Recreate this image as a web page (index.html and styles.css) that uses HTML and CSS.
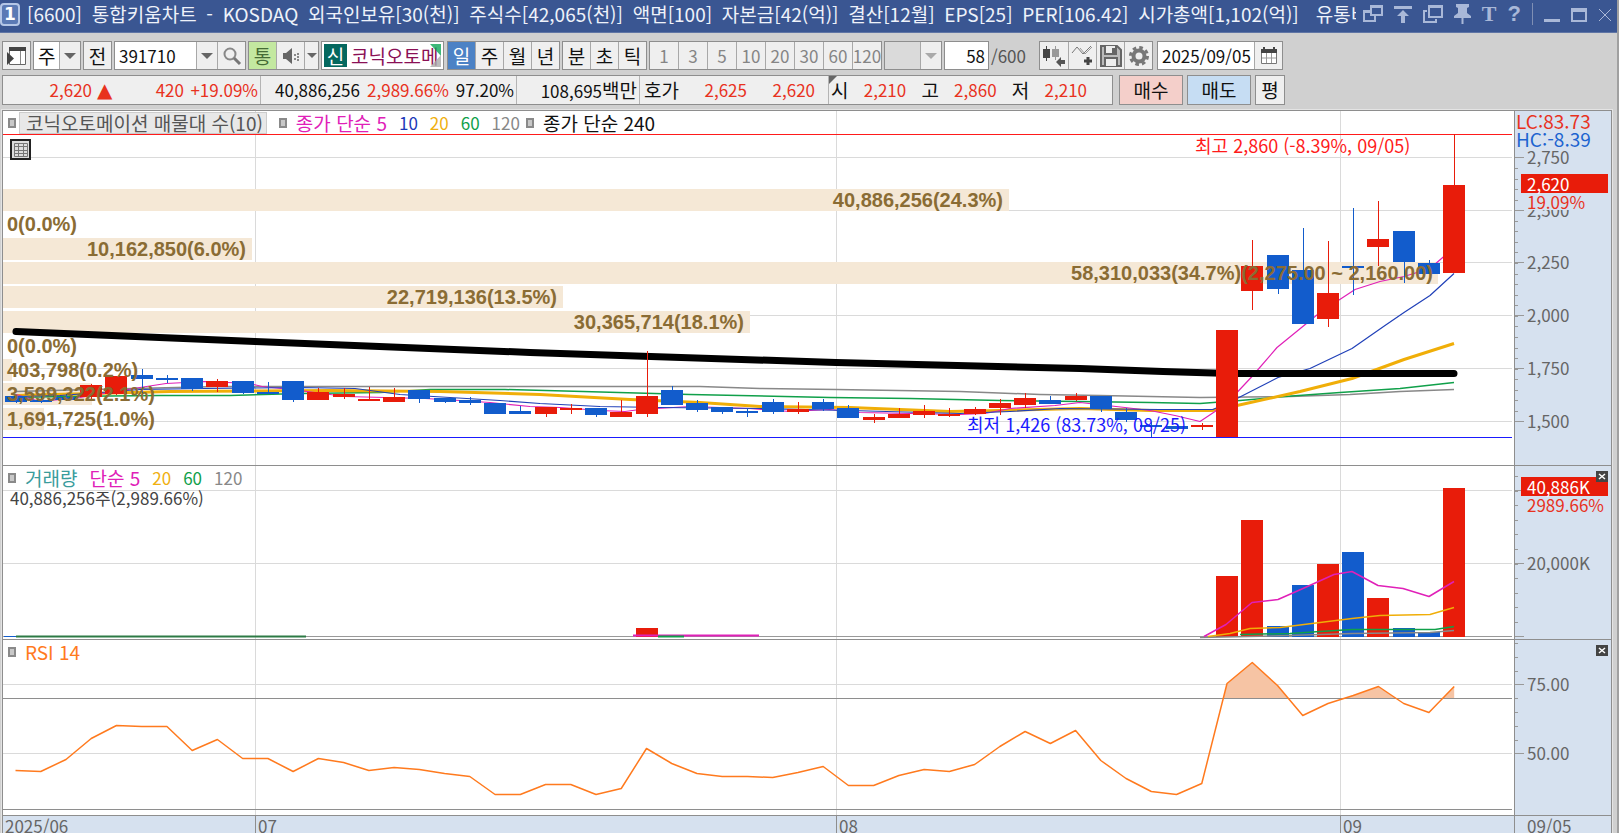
FILE: index.html
```
<!DOCTYPE html>
<html lang="ko">
<head>
<meta charset="utf-8">
<title>통합키움차트</title>
<link rel="stylesheet" href="styles.css">
</head>
<body>
<header class="titlebar">
  <span class="screen-no">1</span>
  <h1 class="title">
    <span>[6600]</span><span>통합키움차트</span><span>-</span><span>KOSDAQ</span><span>외국인보유[30(천)]</span><span>주식수[42,065(천)]</span><span>액면[100]</span><span>자본금[42(억)]</span><span>결산[12월]</span><span>EPS[25]</span><span>PER[106.42]</span><span>시가총액[1,102(억)]</span>
  </h1>
  <span class="title-cut">유통비율</span>
  <nav class="window-tools">
    <button aria-label="창 분리"><svg width="20" height="20" viewBox="0 0 20 20"><path d="M8 2h11v9H8zM8 3h11" class="ln"/><path d="M8 7H1v10h11v-6M1 8h7" class="ln"/></svg></button>
    <button aria-label="맨 위로"><svg width="18" height="20" viewBox="0 0 18 20"><path d="M0 2h18v3H0zM9 6l6 6h-4v7H7v-7H3z" class="fl"/></svg></button>
    <button aria-label="창 복사"><svg width="20" height="20" viewBox="0 0 20 20"><path d="M6 2h13v11H6zM6 3h13" class="ln"/><path d="M4 7H1v11h12v-3" class="ln"/></svg></button>
    <button aria-label="고정"><svg width="17" height="22" viewBox="0 0 17 22"><path d="M2 1h13v3l-2 1v5l4 3v2H9.500v6h-2v-6H0v-2l4-3V5L2 4z" class="fl"/></svg></button>
    <button class="glyph serif" aria-label="글자">T</button>
    <button class="glyph" aria-label="도움말">?</button>
    <span class="bar"></span>
    <button aria-label="최소화"><svg width="16" height="20" viewBox="0 0 16 20"><path d="M0 15h16v3H0z" class="fl"/></svg></button>
    <button aria-label="최대화"><svg width="16" height="20" viewBox="0 0 16 20"><path d="M1 5h14v12H1z" class="ln"/><path d="M0 4h16v4H0z" class="fl"/></svg></button>
    <button aria-label="닫기"><svg width="14" height="20" viewBox="0 0 14 20"><path d="M1 5l12 12M13 5L1 17" class="ln thin"/></svg></button>
  </nav>
</header>

<div class="tools">
  <div class="group"><button class="sq" aria-label="메뉴 보기"><svg width="22" height="22" viewBox="0 0 22 22"><path d="M3.500 2.500h16v17h-16z" fill="#fff" stroke="#666"/><path d="M3 2h17v4H3z" fill="#444"/><path d="M14.500 6v13" stroke="#888"/><path d="M1 7l7 6.500L1 20z" fill="#444"/></svg></button></div>
  <div class="group combo"><select class="kind" aria-label="종목 구분"><option>주</option></select><i class="arrow"></i></div>
  <div class="group"><button class="sq">전</button></div>
  <div class="group"><input class="code" aria-label="종목코드" value="391710"><button class="drop" aria-label="종목 목록"><i class="tri"></i></button><button class="sq" aria-label="검색"><svg width="20" height="20" viewBox="0 0 20 20"><circle cx="8" cy="8" r="5.500" fill="none" stroke="#888" stroke-width="2"/><path d="M12 12l6 6" stroke="#777" stroke-width="3"/></svg></button></div>
  <div class="group"><button class="sq green">통</button><button class="sq" aria-label="소리"><svg width="18" height="20" viewBox="0 0 18 20"><path d="M1 7h3l6-5v16l-6-5H1z" fill="#666"/><path d="M12 8h2v2h-2zM12 12h2v2h-2zM15 7h2v2h-2zM15 10h2v2h-2zM15 13h2v2h-2z" fill="#888"/></svg></button><button class="mini" aria-label="소리 설정"><i class="tri small"></i></button></div>
  <div class="group stock"><b class="credit">신</b><input class="name" aria-label="종목명" value="코닉오토메이션"><i class="fold"></i><i class="grip"></i></div>
  <div class="group"><button class="sq on">일</button><button class="sq">주</button><button class="sq">월</button><button class="sq">년</button></div>
  <div class="group"><button class="sq">분</button><button class="sq">초</button><button class="sq">틱</button></div>
  <div class="group"><button class="sq dim">1</button><button class="sq dim">3</button><button class="sq dim">5</button><button class="sq dim">10</button><button class="sq dim">20</button><button class="sq dim">30</button><button class="sq dim">60</button><button class="sq dim">120</button></div>
  <div class="group combo off"><select class="period" aria-label="주기" disabled><option></option></select><i class="arrow"></i></div>
  <div class="counter"><div class="group"><input class="count" id="count" value="58"></div><label for="count">/600</label></div>
  <div class="group icons"><button class="sq" aria-label="차트 유형"><svg width="24" height="24" viewBox="0 0 24 24"><path d="M1 5h7v9H1z" fill="#444"/><path d="M4.500 2v15" stroke="#444"/><path d="M10 5h7v8h-7z" fill="#999"/><path d="M13.500 2v14" stroke="#999"/><path d="M14 18l5-5v3h4v4h-4v3z" fill="#555"/></svg></button><button class="sq" aria-label="지표 추가"><svg width="24" height="24" viewBox="0 0 24 24"><path d="M1 9l5-6 6 7 8-8" fill="none" stroke="#777"/><path d="M9 4l5 6 7-7" fill="none" stroke="#999"/><path d="M13 17h8M17 13v8" stroke="#444" stroke-width="3"/></svg></button><button class="sq" aria-label="저장"><svg width="24" height="24" viewBox="0 0 24 24"><path d="M2 2h16l4 4v16H2z" fill="#bbb" stroke="#666" stroke-width="2"/><path d="M6 2v8h11V2M6 22v-8h12v8" fill="#eee" stroke="#666" stroke-width="2"/><path d="M13 4h3v5h-3z" fill="#666"/></svg></button><button class="sq" aria-label="설정"><svg width="22" height="22" viewBox="0 0 22 22"><circle cx="11" cy="11" r="5.500" fill="none" stroke="#777" stroke-width="4"/><circle cx="11" cy="11" r="8.500" fill="none" stroke="#777" stroke-width="3" stroke-dasharray="3.600 3.080"/></svg></button></div>
  <div class="group"><input class="date" aria-label="날짜" value="2025/09/05"><button class="sq" aria-label="달력"><svg width="18" height="20" viewBox="0 0 18 20"><path d="M1.500 5.500h15v12h-15z" fill="#fff" stroke="#777"/><path d="M1 3h16v4H1zM3 1h2v3H3zM13 1h2v3h-2z" fill="#444"/><path d="M6.500 7v10M11.500 7v10M2 12h14" stroke="#999"/></svg></button></div>
</div>

<div class="quote">
  <div class="prices">
    <div class="cell c-now"><span class="up w-now">2,620</span><span class="up tri-up">▲</span><span class="up w-diff">420</span><span class="up w-rate">+19.09%</span></div>
    <div class="cell c-vol"><span>40,886,256</span><span class="up">2,989.66%</span><span>97.20%</span></div>
    <div class="cell c-amt"><span>108,695<b>백만</b></span></div>
    <div class="cell c-ask"><b>호가</b><span class="up">2,625</span><span class="up">2,620</span></div>
    <div class="cell c-ohl"><i class="corner"></i><b>시</b><span class="up">2,210</span><b>고</b><span class="up">2,860</span><b>저</b><span class="up">2,210</span></div>
  </div>
  <button class="act buy">매수</button><button class="act sell">매도</button><button class="act avg">평</button>
</div>

<main class="chart">
  <section class="panel price">
    <svg class="plot" id="price"></svg>
    <div class="legend"><i class="dot"></i><span class="chip">코닉오토메이션 매물대 수(10)</span><i class="dot"></i><span class="pink">종가 단순 5</span><span class="num navy">10</span><span class="num gold">20</span><span class="num leaf">60</span><span class="num gray">120</span><i class="dot near"></i><span>종가 단순 240</span></div>
    <button class="grid-btn" aria-label="표 보기"><svg width="16" height="16" viewBox="0 0 16 16"><path d="M1.500 1.500h13v13h-13zM5.500 1v14M10.500 1v14M1 4.500h14M1 8.500h14M1 11.500h14" fill="none" stroke="#777"/></svg></button>
  </section>
  <aside class="axis"><svg class="scale" id="price-axis"></svg><div class="limits"><span class="up">LC:83.73</span><span class="hc">HC:-8.39</span></div></aside>

  <section class="panel volume">
    <svg class="plot" id="volume"></svg>
    <div class="legend"><i class="dot"></i><span class="teal">거래량</span><span class="pink">단순 5</span><span class="num gold">20</span><span class="num leaf">60</span><span class="num gray">120</span></div>
    <p class="note">40,886,256주(2,989.66%)</p>
  </section>
  <aside class="axis"><svg class="scale" id="volume-axis"></svg><button class="x" aria-label="거래량 닫기"><svg width="12" height="11" viewBox="0 0 12 11"><path d="M3 3l6 5M9 3L3 8" stroke="#fff" stroke-width="1.500"/></svg></button></aside>

  <section class="panel rsi">
    <svg class="plot" id="rsi"></svg>
    <div class="legend"><i class="dot"></i><span class="orange">RSI 14</span></div>
  </section>
  <aside class="axis"><svg class="scale" id="rsi-axis"></svg><button class="x" aria-label="RSI 닫기"><svg width="12" height="11" viewBox="0 0 12 11"><path d="M3 3l6 5M9 3L3 8" stroke="#fff" stroke-width="1.500"/></svg></button></aside>

  <footer class="dates"><span class="m6">2025/06</span><span class="m7">07</span><span class="m8">08</span><span class="m9">09</span></footer>
  <div class="today">09/05</div>
</main>
<script src="script.js"></script>
</body>
</html>
```
FILE: styles.css
```
* { box-sizing: border-box; }
html, body { height: 100%; }
body {
  margin: 0;
  display: flex;
  flex-direction: column;
  overflow: hidden;
  background: #d0d0d0;
  border-right: 2px solid #a0a0a0;
  color: #111;
  font-family: "Noto Sans CJK KR", sans-serif;
  font-size: 19px;
  line-height: 20px;
  white-space: nowrap;
}
button, input, select { font: inherit; color: inherit; margin: 0; padding: 0; border: 0; border-radius: 0; }
button { display: flex; align-items: center; justify-content: center; }
i { font-style: normal; }
b { font-weight: normal; }

.titlebar {
  display: flex;
  align-items: center;
  height: 33px;
  flex: none;
  margin-right: -2px;
  padding: 0 7px 4px 0;
  background: #3a5692;
  border-bottom: 1px solid #5f75a5;
  color: #eef2fa;
}
.screen-no {
  width: 20px;
  height: 23px;
  border: 2px solid #b4c6e6;
  border-radius: 4px;
  background: #5b7ab5;
  color: #fff;
  font: bold 17px/19px "DejaVu Sans", sans-serif;
  text-align: center;
}
.title {
  display: flex;
  justify-content: space-between;
  flex: 1;
  margin: 0 17px 0 7px;
  font-size: inherit;
  font-weight: normal;
}
.title-cut { width: 40px; overflow: hidden; }
.window-tools { display: flex; align-items: center; gap: 11px; margin-left: 7px; color: #a9b8d8; }
.window-tools button { background: none; height: 24px; }
.window-tools .ln { fill: none; stroke: #a9b8d8; stroke-width: 2; }
.window-tools .thin { stroke-width: 1; }
.window-tools .fl { fill: #a9b8d8; }
.glyph { font: bold 22px/24px "Liberation Sans", sans-serif; }
.glyph.serif { font-family: "Liberation Serif", serif; }
.bar { width: 1px; height: 22px; background: #7f8fb4; margin: 0; }

.tools { display: flex; align-items: center; gap: 2px; flex: none; padding: 8px 2px 0; }
.group { display: flex; position: relative; height: 29px; border: 1px solid #8e8e8e; background: #a8a8a8; gap: 1px; }
.sq { width: 27px; background: #efefef; }
.dim { width: 28px; color: #858585; font-size: 17px; }
.drop { width: 20px; background: #efefef; }
.mini { width: 13px; background: #efefef; }
.tri { border: 6px solid transparent; border-top-color: #666; border-bottom: 0; }
.tri.small { border-width: 5px; border-bottom: 0; }
.green { background: #c3e8a0; color: #456b35; }
.on { background: #4c82c5; color: #fff; }
.combo select { appearance: none; background: #fff; width: 46px; padding-left: 4px; }
.combo .arrow { position: absolute; right: 0; top: 0; width: 21px; height: 27px; background: #efefef; border-left: 1px solid #a8a8a8; pointer-events: none; }
.combo .arrow::after { content: ""; position: absolute; left: 4px; top: 11px; border: 6px solid transparent; border-top-color: #666; border-bottom: 0; }
.combo .period { width: 56px; background: #efefef; }
.off .arrow::after { border-top-color: #aaa; }
.code { width: 81px; padding-left: 4px; background: #fff; font-size: 17px; }
.stock { background: #fff; width: 123px; padding: 2px; margin-right: 1px; }
.credit { width: 23px; background: #04685f; color: #fff; text-align: center; line-height: 23px; }
.name { width: 90px; padding-left: 3px; color: #8a1055; background: none; }
.fold, .grip { position: absolute; right: 2px; width: 11px; height: 12px; }
.fold { top: 2px; background: #0ca657; clip-path: polygon(0 0, 100% 0, 100% 100%); opacity: .8; }
.grip { bottom: 2px; background: #aaa; clip-path: polygon(100% 0, 100% 100%, 0 100%); opacity: .8; }
.counter { display: flex; align-items: center; gap: 2px; font-size: 17px; }
.count { width: 43px; padding-right: 3px; text-align: right; background: #fff; }
.counter label { width: 46px; color: #555; }
.icons { margin-right: 2px; }
.icons .sq:first-child { width: 28px; }
.date { width: 96px; padding-left: 4px; background: #fff; font-size: 17px; }

.quote { display: flex; gap: 4px; flex: none; padding: 5px 2px 0; }
.prices { display: flex; height: 30px; width: 1111px; margin-right: 2px; border: 1px solid #8e8e8e; background: #efefef; font-size: 17px; }
.prices b { font-size: 19px; }
.cell { display: flex; align-items: center; justify-content: space-between; position: relative; padding: 0 2px 0 4px; border-right: 1px solid #b4b4b4; }
.cell:last-child { border: 0; }
.c-now { width: 258px; }
.w-now { width: 85px; text-align: right; }
.tri-up { width: 24px; padding-left: 3px; font: 20px/20px "DejaVu Sans", sans-serif; }
.w-diff { width: 68px; padding-right: 4px; text-align: right; }
.w-rate { width: 68px; text-align: right; }
.c-vol { width: 256px; padding-left: 14px; }
.c-amt { width: 123px; justify-content: flex-end; }
.c-ask { width: 189px; padding-right: 13px; }
.c-ohl { flex: 1; padding-right: 25px; padding-left: 2px; }
.corner { position: absolute; left: 0; top: 0; border: 4px solid #666; border-right-color: transparent; border-bottom-color: transparent; }
.up { color: #e8321e; }
.act { height: 30px; border: 1px solid #8e8e8e; background: #efefef; }
.buy { width: 64px; background: #f4cfca; }
.sell { width: 64px; background: #c6ddf3; }
.avg { width: 30px; }

.chart {
  display: grid;
  grid-template-columns: 1fr 97px;
  grid-template-rows: 355fr 174fr 176fr 17px;
  flex: 1;
  min-height: 0;
  margin: 5px 5px 0 2px;
  border: 1px solid #8e8e8e;
  border-bottom: 0;
  background: #fff;
  outline: 1px solid #e4e4e4;
}
.panel, .axis { position: relative; min-width: 0; min-height: 0; border-bottom: 1px solid #8e8e8e; }
.axis, .today { background: #d6e1ef; border-left: 1px solid #8e8e8e; }
.plot, .scale { position: absolute; inset: 0; width: 100%; height: 100%; }
.plot text, .scale text { dominant-baseline: central; }
.legend { position: relative; display: flex; align-items: center; gap: 12px; height: 23px; padding-left: 5px; }
.legend .dot + span { margin-left: -3px; }
.num { font-size: 17px; }
.dot { width: 8px; height: 10px; border: 2px solid #8a8a8a; background: #c8c8c8; }
.near { margin-left: -6px; }
.legend .dot + .chip { margin-left: -9px; }
.chip { height: 22px; padding: 0 3px 0 6px; background: #e8e8e8; border: 1px solid #ccc; color: #555; }
.pink { color: #e020b8; }
.navy { color: #1c38b8; }
.gold { color: #f0b010; }
.leaf { color: #10a04a; }
.gray { color: #888; }
.teal { color: #3a9c9c; }
.orange { color: #ff7a1e; }
.note { position: relative; margin: 0; padding-left: 7px; color: #444; font-size: 17px; line-height: 18px; }
.grid-btn { position: absolute; left: 7px; top: 28px; width: 21px; height: 21px; background: #ddd; border: 2px solid #222; }
.limits { position: absolute; left: 0; top: 1px; display: grid; padding: 0 8px 2px 1px; background: #d6e1ef; line-height: 18px; }
.hc { color: #1c64d0; }
.x { position: absolute; right: 3px; top: 5px; width: 12px; height: 11px; background: #444; }
.dates { display: grid; grid-template-columns: 252fr 581fr 504fr 174fr; background: #d6e1ef; color: #666; font-size: 17px; overflow: hidden; }
.dates span { padding-left: 2px; line-height: 20px; border-left: 1px solid #8e8e8e; }
.dates .m6 { border: 0; }
.today { padding-left: 12px; color: #666; font-size: 17px; line-height: 20px; overflow: hidden; }

.label { font-size: 17px; fill: #666; }
.mark { font-size: 18px; }
.share { font: bold 20px "Liberation Sans", sans-serif; fill: #8a6c34; }
```
FILE: script.js
```
const RED = '#e81c0a', BLUE = '#125ccc', PINK = '#e020b8', NAVY = '#2040b8', GOLD = '#f0ae08', GREEN = '#10a04a', GRAY = '#888';
const AXIS = '#999', GRID = '#dadada';
const PLOT_W = 1511;
const barX = i => 12.5 + 25.24 * i;

/* direction, high, body top, body bottom, low */
const candles = [
  ['b',396,396,402,403],['b',396,400,402,403],['b',394,397,400,401],['r',384,385,397,399],['r',376,376,394,395],
  ['b',369,375,379,396],['b',375,378,379,383],['b',378,378,389,391],['r',379,381,387,392],['b',381,381,393,394],
  ['b',382,392,393,393],['b',381,381,400,402],['r',388,392,400,400],['r',388,394,397,399],['r',387,399,400,400],
  ['r',388,397,402,402],['b',390,390,399,403],['b',398,398,402,403],['b',397,400,403,405],['b',403,403,414,414],
  ['b',406,411,414,414],['r',407,407,414,417],['r',404,408,410,414],['b',408,408,415,417],['r',400,412,417,417],
  ['r',351,396,414,417],['b',386,390,405,405],['b',400,403,410,412],['b',407,407,412,414],['b',408,411,412,417],
  ['b',399,402,412,414],['r',402,409,412,414],['b',399,402,409,411],['b',405,408,418,418],['r',414,417,420,423],
  ['r',408,414,418,418],['r',405,411,415,418],['r',408,414,415,417],['r',407,409,414,415],['r',399,403,408,415],
  ['r',393,398,405,408],['b',396,400,404,404],['r',393,396,400,401],['b',396,396,409,412],['b',408,412,420,422],
  ['b',422,425,427,437],['b',424,426,429,429],['r',423,425,426,430],['r',330,330,437,437],['r',240,266,291,310],
  ['b',255,255,289,294],['b',228,270,324,324],['r',241,293,319,327],['b',208,266,268,295],['r',201,239,247,266],
  ['b',231,231,262,283],['b',260,263,274,274],['r',134,185,273,273]
];
const averages = [
  [GRAY, 1.5, [[16,391],[90,389],[220,386],[700,386],[760,388],[836,389],[960,391],[1040,394],[1100,395],[1200,397],[1290,396],[1350,394],[1400,391],[1454,389]]],
  [GREEN, 1.5, [[16,397],[60,396],[160,395],[230,395],[300,393],[380,392],[430,389],[505,389],[583,391],[690,394],[830,397],[910,398],[1000,400],[1080,401],[1150,402],[1200,403],[1240,400],[1285,396],[1340,392],[1400,388],[1454,382]]],
  [GOLD, 3, [[16,395],[170,391],[330,390],[440,391],[540,394],[630,399],[700,402],[760,406],[850,407],[950,411],[1000,410],[1080,408],[1150,410],[1212,410],[1237,405],[1300,391],[1352,378],[1404,359],[1454,343]]],
  [PINK, 1.2, [[16,394],[40,401],[80,397],[140,387],[166,383],[205,381],[250,383],[262,386],[300,390],[345,396],[425,398],[460,400],[490,402],[530,406],[560,407],[600,410],[625,411],[640,409],[690,406],[750,408],[790,411],[830,409],[860,412],[960,414],[985,413],[1010,408],[1055,405],[1080,402],[1125,407],[1150,410],[1175,415],[1200,421],[1215,411],[1237,392],[1252,376],[1277,347],[1304,325],[1320,312],[1355,289],[1380,281],[1404,276],[1430,268],[1445,255]]],
  [NAVY, 1.2, [[16,396],[60,395],[140,389],[205,388],[300,387],[355,388],[400,394],[450,397],[500,400],[540,403],[600,406],[660,407],[760,408],[850,410],[960,413],[1010,411],[1060,408],[1160,409],[1213,409],[1237,398],[1278,377],[1310,368],[1352,348],[1385,325],[1404,312],[1430,295],[1454,273]]],
  ['#000', 7, [[16,331],[255,341],[530,352],[836,362],[1080,368],[1163,371],[1230,373],[1454,373]]]
];
/* bar end, label, label anchor x, anchor side */
const shares = [
  [1009,'40,886,256(24.3%)',1003,'end'],[0,'0(0.0%)',7,'start'],[252,'10,162,850(6.0%)',246,'end'],
  [1438,'58,310,033(34.7%)(2,275.00 ~ 2,160.00)',1433,'end'],[563,'22,719,136(13.5%)',557,'end'],[750,'30,365,714(18.1%)',744,'end'],
  [0,'0(0.0%)',7,'start'],[12,'403,798(0.2%)',7,'start'],[92,'3,599,322(2.1%)',7,'start'],[44,'1,691,725(1.0%)',7,'start']
];
const volumes = [[25,'r',628],[48,'r',576],[49,'r',520],[50,'b',626],[51,'b',585],[52,'r',564],[53,'b',552],[54,'r',598],[55,'b',628],[56,'b',632],[57,'r',488]];
const volumeAverages = [
  [GRAY, 1.5, [[1200,637],[1290,635],[1352,633],[1430,632],[1454,630]]],
  [GREEN, 1.5, [[1240,634],[1290,633],[1320,631],[1352,629],[1435,629],[1454,626]]],
  [GOLD, 1.5, [[1208,636],[1230,633],[1250,628],[1280,627],[1320,622],[1352,618],[1380,615],[1430,614],[1454,607]]],
  [PINK, 1.5, [[1204,636],[1226,624],[1252,602],[1278,599],[1303,588],[1334,574],[1352,571],[1378,585],[1403,588],[1429,596],[1454,581]]],
  ['#2d7a45', 2, [[16,636],[306,636]]], [PINK, 2, [[633,635],[759,635]]], [GREEN, 2, [[658,636],[684,636]]], [BLUE, 1, [[4,636],[16,636]]]
];
const rsi = [770,771,759,738,725,726,726,750,739,758,758,771,758,762,770,767,769,773,776,794,794,784,784,794,788,748,763,773,776,776,777,772,766,785,785,775,769,771,764,746,731,743,730,760,778,791,794,783,683,662,685,715,703,695,686,703,712,686];

function surface(id, baseW, top, baseH) {
  const svg = document.getElementById(id);
  const box = svg.getBoundingClientRect();
  const X = x => x * box.width / baseW;
  const Y = y => (y - top) * box.height / baseH;
  let out = '';
  return {
    rect(x1, y1, x2, y2, fill) {
      out += `<rect x="${X(x1)}" y="${Y(y1)}" width="${X(x2 - x1)}" height="${Math.max(1, Y(y2) - Y(y1))}" fill="${fill}" shape-rendering="crispEdges"/>`;
    },
    h(y, x1, x2, fill) { this.rect(x1, y, x2, y + 1, fill); },
    v(x, y1, y2, fill) { out += `<rect x="${X(x)}" y="${Y(y1)}" width="1" height="${Y(y2) - Y(y1)}" fill="${fill}" shape-rendering="crispEdges"/>`; },
    line(points, color, width) {
      out += `<polyline points="${points.map(p => X(p[0]) + ',' + Y(p[1])).join(' ')}" fill="none" stroke="${color}" stroke-width="${width}" stroke-linejoin="round" stroke-linecap="${width > 5 ? 'round' : 'butt'}"/>`;
    },
    area(points, fill, limit) {
      out += `<clipPath id="${id}-clip"><rect width="${box.width}" height="${Y(limit)}"/></clipPath><polygon clip-path="url(#${id}-clip)" points="${points.map(p => X(p[0]) + ',' + Y(p[1])).join(' ')}" fill="${fill}"/>`;
    },
    text(x, y, str, cls, fill, anchor = 'start') {
      out += `<text x="${X(x)}" y="${Y(y)}" class="${cls}" text-anchor="${anchor}"${fill ? ` style="fill:${fill}"` : ''}>${str}</text>`;
    },
    done() { svg.innerHTML = out; }
  };
}

const page = points => points.map(([x, y]) => [x - 3, y + 0.5]);

function grid(s, rows, top, bottom) {
  rows.forEach(y => s.h(y, 0, 1509, GRID));
  [252, 833, 1337].forEach(x => s.v(x, top, bottom, GRID));
}

function drawPrice() {
  const s = surface('price', PLOT_W, 111, 354);
  grid(s, [157, 210, 262, 315, 368, 421], 111, 465);
  shares.forEach(([end], i) => { if (end) s.rect(0, Math.round(189 + i * 24.3), end - 3, Math.round(189 + i * 24.3) + 22, '#f5e8d6'); });
  averages.forEach(([c, w, p]) => s.line(page(p), c, w));
  s.h(134, 0, 1509, '#ff1a1a');
  s.h(437, 0, 1509, '#1a1aff');
  candles.forEach(([d, hi, t, b, lo], i) => {
    const c = d === 'r' ? RED : BLUE, x = Math.round(barX(i));
    s.v(x, hi, lo, c);
    s.rect(x - 11, t, x + 11, Math.max(b, t + 2), c);
  });
  shares.forEach(([, str, x, side], i) => s.text(x - 3, 200 + i * 24.3, str, 'share', '', side));
  s.text(1192, 145, '최고 2,860 (-8.39%, 09/05)', 'mark', '#ff1a1a');
  s.text(964, 424, '최저 1,426 (83.73%, 08/25)', 'mark', '#1a1aff');
  s.done();
}

function drawVolume() {
  const s = surface('volume', PLOT_W, 466, 173);
  grid(s, [490, 563], 466, 639);
  s.h(636, 0, 1509, AXIS);
  volumes.forEach(([i, d, t]) => { const x = Math.round(barX(i)); s.rect(x - 11, t, x + 11, 637, d === 'r' ? RED : BLUE); });
  volumeAverages.forEach(([c, w, p]) => s.line(page(p), c, w));
  s.done();
}

function drawRsi() {
  const s = surface('rsi', PLOT_W, 640, 175);
  grid(s, [684, 753], 640, 815);
  const points = rsi.map((y, i) => [barX(i), y + 0.5]);
  s.area([[barX(47), 900], ...points.slice(47), [barX(57), 900]], '#f6c4a4', 698);
  s.h(698, 0, 1509, '#8e8e8e');
  s.h(809, 0, 1509, '#8e8e8e');
  s.line(points, '#ff7a1e', 1.5);
  s.done();
}

function drawAxis(id, top, height, labels, step, from, to, tag) {
  const s = surface(id, 96, top, height);
  for (let y = from; y < to; y += step) s.h(Math.round(y), 0, 3, AXIS);
  labels.forEach(([y, str]) => { s.h(y, 0, 9, AXIS); if (str) s.text(12, y - 1, str, 'label'); });
  if (tag) {
    s.rect(12, tag.y + 19, 80, tag.y + 36, '#d6e1ef');
    s.rect(6, tag.y, 93, tag.y + 19, RED);
    s.text(12, tag.y + 9, tag.value, 'label', '#fff');
    s.text(12, tag.y + 27, tag.rate, 'label', '#e8321e');
  }
  s.done();
}

function draw() {
  drawPrice();
  drawVolume();
  drawRsi();
  drawAxis('price-axis', 111, 354, [[157,'2,750'],[210,'2,500'],[262,'2,250'],[315,'2,000'],[368,'1,750'],[421,'1,500']], 10.56, 168, 421, { y: 174, value: '2,620', rate: '19.09%' });
  drawAxis('volume-axis', 466, 173, [[490,''],[563,'20,000K'],[636,'']], 14.6, 476, 636, { y: 477, value: '40,886K', rate: '2989.66%' });
  drawAxis('rsi-axis', 640, 175, [[684,'75.00'],[753,'50.00']], 13.8, 643, 753);
}

draw();
window.addEventListener('resize', draw);
```
